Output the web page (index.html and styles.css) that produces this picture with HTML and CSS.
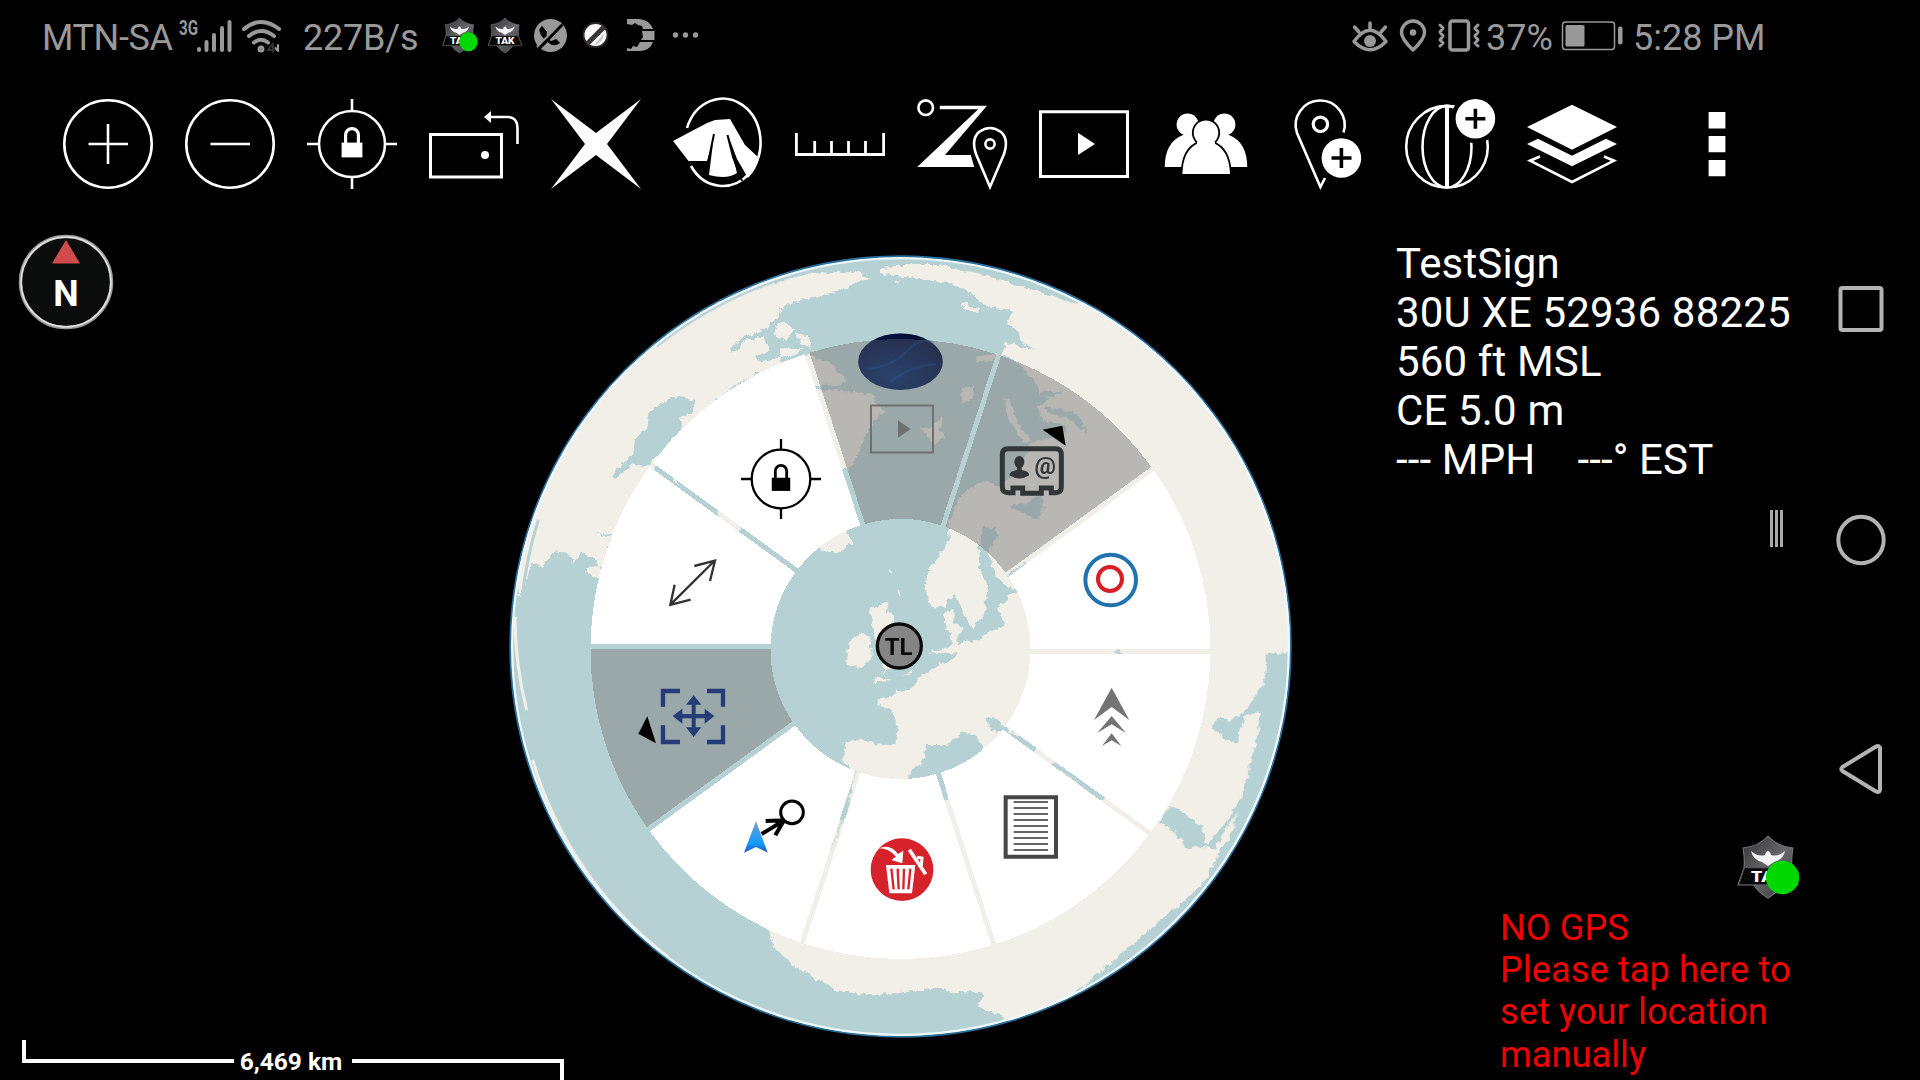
FILE: index.html
```html
<!DOCTYPE html>
<html lang="en">
<head>
<meta charset="utf-8">
<title>TAK map</title>
<link rel="stylesheet" href="styles.css">
</head>
<body>
<svg class="defs" aria-hidden="true">
  <defs>
    <linearGradient id="steel" x1="0" y1="0" x2="1" y2="1"><stop offset="0" stop-color="#2c2c30"/><stop offset=".5" stop-color="#68686c"/><stop offset="1" stop-color="#2e2e32"/></linearGradient>
    <symbol id="lock" viewBox="0 0 90 90">
      <g fill="none" stroke="currentColor" stroke-width="2.6"><circle cx="45" cy="45" r="33"/><path d="M45 0V12M45 78V90M0 45H12M78 45H90"/><path d="M38.6 44V36a6.4 6.4 0 0 1 12.8 0V44" stroke-width="3.2"/></g>
      <path d="M34.6 43.6H55.4V58.4H34.6z" fill="currentColor"/>
    </symbol>
    <symbol id="tak" viewBox="0 0 62 64">
      <path d="M31 1C24 9 15 12 6 13Q8 24 7 33L1 50H17Q21 57 31 63Q41 57 45 50H61L55 33Q54 24 56 13C47 12 38 9 31 1z" fill="url(#steel)" stroke="#77777a" stroke-width="1.1"/>
      <path d="M7.500 33H54.500L60 49.500H2z" fill="#060606" stroke="#4a4a4c" stroke-width=".8"/>
      <path d="M14 16Q21 22 28 20L29 17L31 16L33 17L34 20Q41 22 48 16Q46 25 37 27L31 31L25 27Q16 25 14 16z" fill="#f4f4f4"/>
      <text x="31" y="47" text-anchor="middle" textLength="34" lengthAdjust="spacingAndGlyphs" class="tak-label">TAK</text>
    </symbol>
  </defs>
</svg>
<div class="screen">
  <div class="app">
    <header class="status">
      <div class="status-left">
        <span class="carrier">MTN-SA</span>
        <svg class="signal" width="56" height="36" viewBox="178 17 56 36">
          <text x="179" y="34" class="net" textLength="19" lengthAdjust="spacingAndGlyphs">3G</text>
          <path d="M199 48V49M206.500 41V49M214 34V49M222 27V49M229.500 21V49" stroke="currentColor" stroke-width="4" stroke-linecap="round"/>
        </svg>
        <svg class="wifi" width="42" height="36" viewBox="241 17 42 36" fill="none" stroke="currentColor" stroke-width="4" stroke-linecap="round">
          <path d="M244 28Q261 14 279 28M249 35Q261 25 274 35M254 41.500Q261 36 268 41.500"/><circle cx="261" cy="48" r="1.500"/><path d="M278 44V50M278 50L275.500 47" stroke-width="2"/><path d="M272.500 43L268 49H274M273 43V51" stroke="#333" stroke-width="2"/>
        </svg>
        <span class="rate">227B/s</span>
        <svg class="notices" width="260" height="38" viewBox="441 18 260 38">
          <use href="#tak" x="442" y="18" width="35" height="37"/><ellipse cx="468.500" cy="42.700" rx="9.300" ry="9.500" fill="#00d800"/>
          <use href="#tak" x="487.500" y="18" width="35" height="37"/>
          <circle cx="550.500" cy="36.500" r="16.500" fill="#999"/>
          <path d="M542 28L546 33Q545 38 551 43L556 41L559 44Q555 47 550 44Q541 38 540 31z" fill="#000" stroke="#000" stroke-width="1.500"/><path d="M539 49L562 25" stroke="#000" stroke-width="4"/><path d="M537 48L561 23.500" stroke="#999" stroke-width="2"/>
          <circle cx="595.500" cy="36" r="12" fill="#fff" stroke="#2c2626" stroke-width="2"/><path d="M594 46Q604 44 604 34z" fill="#ccc"/><path d="M587 45L604 28" stroke="#3b3434" stroke-width="5"/>
          <path d="M627 20H639Q650 21 653 30H643L642 27L638 26L635 24L632 26L627 25zM642 32H654.500V41H641L643 38zM640 43H653Q650 52 639 52H627V49L631 50L633 47L637 48z" fill="#999"/>
          <g fill="#999"><circle cx="675.500" cy="36" r="2.700"/><circle cx="685.500" cy="36" r="2.700"/><circle cx="695.500" cy="36" r="2.700"/></g>
        </svg>
      </div>
      <div class="status-right">
        <svg width="132" height="38" viewBox="1350 18 132 38" fill="none" stroke="#999" stroke-width="3.500" stroke-linecap="round" stroke-linejoin="round">
          <path d="M1354 42.500Q1370 20 1386 42.500Q1370 59 1354 42.500zM1370 24V30M1354.500 28L1359 33M1385.500 28L1381 33"/><circle cx="1370" cy="42" r="6" fill="#999" stroke="none"/>
          <path d="M1413 51Q1401.500 40 1401.500 33.500A11.500 11.500 0 0 1 1424.500 33.500Q1424.500 40 1413 51z"/><circle cx="1413" cy="33.500" r="3.300" fill="#999" stroke="none"/>
          <rect x="1450" y="22" width="18.500" height="29" rx="2.500"/><path d="M1440 26L1443 29L1440 33L1443 37L1440 41L1443 44L1440 47M1478 26L1475 29L1478 33L1475 37L1478 41L1475 44L1478 47" stroke-width="3"/>
        </svg>
        <span class="percent">37%</span>
        <svg class="battery" width="64" height="34" viewBox="1560 20 64 34"><rect x="1562.500" y="23" width="52" height="27.500" rx="3" fill="none" stroke="#999" stroke-width="1.500"/><rect x="1565.500" y="26" width="19" height="21.500" rx="1.500" fill="#999"/><rect x="1618" y="27.500" width="4.500" height="18" rx="2" fill="#999"/></svg>
        <span class="clock">5:28 PM</span>
      </div>
    </header>

    <nav class="toolbar">
      <svg viewBox="0 0 90 90" class="line"><circle cx="45" cy="45" r="43.700"/><path d="M25.500 45H65M45 25V65"/></svg>
      <svg viewBox="0 0 90 90" class="line"><circle cx="45" cy="45" r="43.700"/><path d="M25.500 45H65"/></svg>
      <svg viewBox="0 0 90 90"><use href="#lock" width="90" height="90"/></svg>
      <svg viewBox="0 0 90 90" class="line"><path d="M1.500 35.500H72.500V78H1.500z" stroke-width="3"/><path d="M58 18H80Q88.500 19 88.500 29V45"/><path d="M55 18L62 12V24z" fill="#fff" stroke="none"/><circle cx="56" cy="56" r="4" fill="#fff" stroke="none"/></svg>
      <svg viewBox="0 0 90 90" class="solid"><path d="M0 0L45 34L90 0L56 45L90 90L45 56L0 90L34 45z"/></svg>
      <svg viewBox="0 0 90 90" class="solid"><path d="M14 29A37.800 43.700 0 1 1 18 67" fill="none" stroke="#fff" stroke-width="2.600"/><path d="M0 42L34 24L42 21L44 25L40 44L34 62L15.500 62zM42 21L57 20L72 46L86 59Q84 70 75 79L64 60L55 36L64 74Q54 81 36 76L40 44z"/><path d="M41 35L35 64M54.500 36L60 58L69 82" fill="none" stroke="#000" stroke-width="2"/></svg>
      <svg viewBox="0 0 90 90" class="line"><path d="M1.400 34V55.500H88.600V34M19.700 42V55M36.500 42V55M53.500 42V55M70.500 42V55" stroke-width="2.800"/></svg>
      <svg viewBox="0 0 90 90" class="line"><circle cx="8.700" cy="8.700" r="7.300"/><path d="M22.800 6.700H70L28 56H53.800L57.200 68H0.200L61.200 10.300H22.800z" fill="#fff" stroke="none"/><path d="M73 88L59 55Q54 40 62 33Q73 25 84 33Q92 40 87 55z"/><circle cx="73" cy="45" r="4.600"/></svg>
      <svg viewBox="0 0 90 90" class="line"><path d="M1.500 12.800H88.500V77.500H1.500z" stroke-width="3"/><path d="M39 33.700L56 45L39 56z" fill="#fff" stroke="none"/></svg>
      <svg viewBox="0 0 90 90" class="solid"><circle cx="26.600" cy="25.500" r="11"/><circle cx="63.400" cy="25.500" r="11"/><path d="M3.700 68Q4 43 22 36H36V68zM86.300 68Q86 43 68 36H54V68z"/><g stroke="#000" stroke-width="3.500" paint-order="stroke"><path d="M21.400 75Q22 50 38 44H52Q68 50 69 75z"/><circle cx="45" cy="33.700" r="12.300"/></g><path d="M36 43H54V50H36z"/></svg>
      <svg viewBox="0 0 90 90" class="line"><path d="M60.500 33.500A24.500 24.500 0 1 0 14 34L37.400 88L42 79"/><circle cx="37.400" cy="25.300" r="7.200" stroke-width="3.200"/><circle cx="58.400" cy="59" r="19.800" fill="#fff" stroke="none"/><path d="M48.500 59H68.500M58.400 49V69" stroke="#000" stroke-width="3.600"/></svg>
      <svg viewBox="0 0 90 90" class="line"><circle cx="42" cy="47.700" r="40.800"/><ellipse cx="42" cy="47.700" rx="24.500" ry="40.800"/><path d="M42 7V88" stroke-width="4"/><circle cx="70.400" cy="19.700" r="24.500" fill="#000" stroke="none"/><circle cx="70.400" cy="19.700" r="19.800" fill="#fff" stroke="none"/><path d="M60.400 19.700H80.400M70.400 9.700V29.700" stroke="#000" stroke-width="3.600"/></svg>
      <svg viewBox="0 0 90 90" class="solid"><path d="M45 5.700L90 28L45 50.700L0 28zM0 45L11 39.700L45 56.700L79 39.700L90 45L45 67.300z"/><path d="M13 57.500L3 61.700L45 83L87 61.700L77 57.500" fill="none" stroke="#fff" stroke-width="2.600"/></svg>
      <svg viewBox="0 0 90 90" class="solid more"><path d="M36.600 13H53.400V29.500H36.600zM36.600 37H53.400V53.300H36.600zM36.600 61H53.400V77.300H36.600z"/></svg>
    </nav>

    <main class="map">
      <section class="left">
        <svg class="compass" width="96" height="96" viewBox="18 234 96 96"><circle cx="66" cy="282" r="45.500" fill="#0b0d0d" stroke="#999" stroke-width="3.500"/><circle cx="66" cy="282" r="45" fill="none" stroke="#e4e4e4" stroke-width="1.500"/><path d="M66 240L80 263.500H52z" fill="#d04b4b"/><text x="66" y="305.500" text-anchor="middle" class="north">N</text></svg>
        <div class="scale"><i class="arm start"></i><b>6,469 km</b><i class="arm end"></i></div>
      </section>

      <svg class="globe" width="800" height="864" viewBox="500 216 800 864">
        <defs>
          <clipPath id="disc"><circle cx="900.500" cy="646.500" r="389.500"/></clipPath>
          <filter id="coast" x="-5%" y="-5%" width="110%" height="110%"><feTurbulence type="fractalNoise" baseFrequency=".16" numOctaves="3" seed="4"/><feDisplacementMap in="SourceGraphic" scale="7" xChannelSelector="R" yChannelSelector="G"/></filter>
          <radialGradient id="deep" cx=".4" cy=".75" r=".8"><stop offset="0" stop-color="#072a63"/><stop offset=".6" stop-color="#04184a"/><stop offset="1" stop-color="#010e30"/></radialGradient>
          <linearGradient id="arrowblue" x1="0" y1="0" x2="0" y2="1"><stop offset="0" stop-color="#9a9aa0"/><stop offset=".35" stop-color="#3d9be8"/><stop offset=".7" stop-color="#149cff"/><stop offset="1" stop-color="#1e55b8"/></linearGradient>
          <path id="wedge" d="M309.960 5A310 310 0 0 1 250.800 182.200L105.200 76.400A130 130 0 0 0 129.900 5z"/>
        </defs>
        <circle cx="900.500" cy="646.500" r="390" fill="#b5d1d3" stroke="#2b6f9c" stroke-width="2.400"/>
        <g clip-path="url(#disc)">
          <g filter="url(#coast)" fill="#f2efe8">
            <!-- North America, Greenland, Iceland -->
            <g transform="translate(500 240) scale(.33333)">
              <path d="M62 1070L98 965L130 985L165 930L205 945L220 970L240 940L275 950L305 985L330 900L500 720L455 690L600 560L640 490L700 440L790 385L770 350L720 340L690 330L730 290L790 270L835 235L850 195L940 170L1010 155L1070 130L1110 110L1060 95L1000 100L960 95L880 110L760 145L600 210L470 290L355 375L170 620L80 810L30 1000z"/>
              <path d="M260 985L300 975V1010L270 1005z"/>
              <path d="M820 255L850 245L885 265L860 300L830 290zM890 275L925 290L935 320L900 310zM735 300L790 290L810 330L760 350L700 345zM840 325L905 325L890 345L840 350zM780 365L850 350L835 380L770 400zM680 380L740 370L730 400L690 405z"/>
              <path d="M520 700L545 745L515 725zM650 820L670 800L730 860L705 880L650 840z"/>
              <path d="M920 340L985 365L1010 390L1035 415L1030 435L960 437L900 430zM900 448L1050 455L1110 460L1130 490L1155 520L1120 545L1100 580L1075 640L1045 688L1000 685L950 620z"/>
              <path d="M900 900L1040 870L1055 905L1030 930L985 940L960 925z"/>
              <path d="M1110 1110L1140 1095L1165 1090L1160 1120L1185 1130L1170 1170L1190 1200L1250 1260L1230 1300L1150 1320L1120 1330L1150 1290L1140 1240L1120 1180z"/>
            </g>
            <!-- Siberia, Scandinavia, Russia -->
            <g transform="translate(880 240) scale(.33333)">
              <path d="M0 90L60 75L180 75L330 108L570 185L700 180L1300 600V1240H140L300 1195L375 1150L350 1100L385 1080L380 1065L430 1055L385 1040L350 1010L325 940L350 885L345 860L310 865L295 940L300 990L325 1040L310 1130L275 1165L250 1120L220 1060L190 1105L155 1100L135 1040L140 990L185 940L210 900L205 850L240 770L290 730L330 725L360 735L420 690L450 610L560 580L550 555L490 540L470 500L510 480L480 460L470 430L420 375L365 340L375 305L465 330L430 310L415 280L380 240L400 215L310 195L270 160L210 130L100 115L0 100z"/>
              <path d="M375 470L390 480L400 520L420 560L455 600L430 605L400 560L380 520zM285 350L350 342L330 365L290 362zM120 560L160 560L185 530L180 570L200 590L160 615zM245 445L280 440L275 480L245 490zM240 190L300 205L290 218L255 208zM40 122L65 122L50 128zM195 1120L220 1110L225 1150L250 1160L230 1220L195 1170z"/>
            </g>
            <!-- Western Europe and north-west Africa -->
            <g transform="translate(500 630) scale(.33333)">
              <path d="M1045 40L1080 10L1110 20L1115 80L1090 110L1040 108zM1120 155L1150 125L1240 100V130L1170 150z"/>
              <path d="M1130 205L1185 200L1190 180L1230 180L1260 140L1400 60V700H1030L1050 495L1065 425L1030 395L1040 335L1060 330L1185 345L1195 310L1185 260L1130 225z"/>
              <path d="M805 905L820 950L900 1020L1020 1085L1140 1095L1320 1075L1360 1090L1440 1085L1450 1100L1430 1130L1510 1160L1560 1230L2300 600V-60L1520 20L1380 40L1330 240L1380 300L1440 430L1300 520L1010 570L990 650L960 700L800 850z"/>
            </g>
          </g>
          <g filter="url(#coast)" fill="#b5d1d3">
            <!-- Hudson Bay -->
            <path transform="translate(500 240) scale(.33333)" d="M590 480L520 468L485 490L445 520L440 560L405 600L400 640L340 700L345 718L400 670L440 680L470 650L550 560L540 530L575 520zM285 878L335 882L330 890zM490 700L655 825L640 840L495 715z"/>
            <!-- White Sea, Kara gulfs, Baltic -->
            <path transform="translate(880 240) scale(.33333)" d="M390 795L440 790L485 760L490 810L475 840L440 825zM500 500L590 520L625 580L600 565L575 540L500 515zM480 455L550 455L530 465L485 470zM380 1005L435 965L445 975L385 1010z"/>
            <!-- Mediterranean, Black Sea, Red Sea, Gulf, Southern Ocean -->
            <g transform="translate(880 630) scale(.33333)">
              <path d="M-5 140L50 150L110 115L140 70L215 50L205 0L120 -60L100 90L0 130zM230 30L250 0L350 -10L320 15L250 35zM0 225L30 235L50 270L45 345L-20 343L-15 260zM60 460L135 385L140 345L200 345L250 305L285 315L310 355L300 420L200 440V510H170L165 460zM312 262L345 265L380 295L470 350L460 370L370 310L335 300zM520 395L580 430L680 500L660 515L570 440L515 405zM700 70L715 55L728 72z"/>
              <path d="M-90 500L-120 600L-150 670L-125 600L-95 500z"/>
              <path d="M1205 45L1210 95L1170 95L1150 160L1105 230L1090 250L1050 270L1010 262L995 295L1045 335L1070 340L1095 255L1140 245L1130 340L1085 500L1050 560L975 655L1000 655L1070 545L1060 600L950 790L850 905L960 810L1110 600L1200 350L1225 150z"/>
              <path d="M865 530L900 540L965 590L980 650L920 655L880 600L840 575zM0 1095L180 1075L220 1090L300 1085L310 1100L290 1130L370 1160L300 1240H-340L-240 1060L-120 1092z"/>
            </g>
          </g>
          <!-- Thin slivers of sea and land that hug the limb -->
          <path transform="translate(500 240) scale(.33333)" d="M470 318A1160 1160 0 0 1 930 94M66 1080A1150 1150 0 0 1 115 840" fill="none" stroke="#b5d1d3" stroke-width="9"/>
          <path transform="translate(880 240) scale(.33333)" d="M230 84A1150 1150 0 0 1 560 180" fill="none" stroke="#b5d1d3" stroke-width="8"/>
          <path transform="translate(500 630) scale(.33333)" d="M45 -40A1150 1150 0 0 0 80 240M98 390A1160 1160 0 0 0 503 980" fill="none" stroke="#f2efe8" stroke-width="9"/>
          <path transform="translate(860 590)" d="M29 -20l3 3M38 0l2 6M79 72l2 4" stroke="#f2efe8" stroke-width="1.500"/>
          <circle cx="900.500" cy="646.500" r="388.600" fill="none" stroke="#eef8fb" stroke-width="2.800"/>
        </g>
        <ellipse cx="900.500" cy="361.700" rx="42.300" ry="28.300" fill="url(#deep)"/>

        <!-- Radial menu, ten slices clockwise from due east -->
        <g transform="translate(900.500 649)" shape-rendering="crispEdges">
          <g fill="#fff"><use href="#wedge"/><use href="#wedge" transform="rotate(36)"/><use href="#wedge" transform="rotate(72)"/><use href="#wedge" transform="rotate(108)"/><use href="#wedge" transform="rotate(180)"/><use href="#wedge" transform="rotate(216)"/><use href="#wedge" transform="rotate(324)"/></g>
          <g fill="#808080" fill-opacity=".5"><use href="#wedge" transform="rotate(144)"/><use href="#wedge" transform="rotate(252)"/><use href="#wedge" transform="rotate(288)"/></g>
        </g>
        <ellipse cx="900.500" cy="361.700" rx="42.300" ry="28.300" fill="url(#deep)" opacity=".42"/>
        <path d="M868 369Q893 366 907 351T934 343M890 382Q910 366 936 364" fill="none" stroke="#2a5796" stroke-width="2.500" opacity=".35"/>

        <!-- Slice icons -->
        <path d="M871 405.500H933V452.500H871z" fill="none" stroke="#707070" stroke-width="2"/><path d="M898 420.500L910.700 429L898 437.700z" fill="#707070"/>
        <use href="#lock" x="741" y="439" width="80" height="80" color="#000"/>
        <path transform="translate(500 240) scale(.33333)" d="M512 1093L643 963M583 978L645 962L630 1023M572 1079L511 1095L524 1034" fill="none" stroke="#333" stroke-width="7"/>
        <g transform="translate(880 240) scale(.33333)">
          <path d="M385 626H527Q544 626 544 643V742Q544 758 527 758H514V744H484V760H428V744H399V758H385Q367 758 367 742V643Q367 626 385 626z" fill="none" stroke="#333638" stroke-width="15"/>
          <ellipse cx="418" cy="666" rx="15" ry="18" fill="#333638"/><path d="M411 675H425V690Q447 693 448 706Q418 725 388 706Q390 693 411 690z" fill="#333638"/>
          <text x="496" y="703" text-anchor="middle" class="at">@</text>
          <path d="M488 569L547 557L557 617z" fill="#000"/>
          <circle cx="692" cy="1020" r="76" fill="none" stroke="#2272ad" stroke-width="12"/><circle cx="690" cy="1017" r="36" fill="none" stroke="#d91f25" stroke-width="12"/>
        </g>
        <g transform="translate(880 630) scale(.33333)">
          <path d="M695 173L748 270L695 231L642 270zM695 258L738 309L695 283L652 309zM695 310L724 348L695 331L666 348z" fill="#747474"/>
          <path d="M377 502H528V680H377z" fill="#fff" stroke="#444647" stroke-width="12"/><path d="M401 516H504M401 534H504M401 552H504M401 570H504M401 588H504M401 606H504M401 624H504M401 642H504M401 660H504" stroke="#666" stroke-width="6"/>
          <circle cx="66" cy="719" r="94" fill="#d6222a"/>
          <path d="M18 705H106L96 790H28z" fill="#fff"/><path d="M34 716L41 778M53 716L56 778M72 716L70 778M91 716L85 778" stroke="#d6222a" stroke-width="7"/><path d="M-3 655Q30 640 54 672L70 662L67 700L34 690L48 680Q26 655 -3 655z" fill="#fff"/><path d="M88 659L137 733" stroke="#fff" stroke-width="11"/><path d="M111 682L126 684L124 708" fill="none" stroke="#fff" stroke-width="9"/>
        </g>
        <g transform="translate(500 630) scale(.33333)">
          <path d="M540 183H489V230M621 183H669V230M489 286V336H540M669 286V336H621" fill="none" stroke="#263c78" stroke-width="13"/>
          <path d="M581 196L604 224H587V252H614V236L643 258L614 281V265H587V292H604L581 321L558 292H575V265H547V281L518 258L547 236V252H575V224H558z" fill="#263c78"/>
          <path d="M442 259L468 340L415 311z" fill="#000"/>
          <path d="M785 612L848 574M797 573L852 571L826 616" fill="none" stroke="#000" stroke-width="12"/><circle cx="876" cy="547" r="34" fill="#fff" stroke="#000" stroke-width="9"/>
          <path d="M768 573L803 668L768 651L732 668z" fill="url(#arrowblue)"/>
          <circle cx="1198" cy="48" r="66" fill="#858585" stroke="#0b0b0b" stroke-width="10"/>
          <text x="1196" y="75" text-anchor="middle" class="tl">TL</text>
        </g>
      </svg>

      <section class="right">
        <div class="info">
          <div>TestSign</div><div>30U XE 52936 88225</div><div>560 ft MSL</div><div>CE 5.0 m</div><div class="speed"><span>--- MPH</span><span>---° EST</span></div>
        </div>
        <div class="grip"><i></i><i></i><i></i></div>
        <svg class="badge" width="62" height="64" viewBox="0 0 62 64"><use href="#tak" width="62" height="64"/><circle cx="45.500" cy="42.500" r="16.700" fill="#00d800"/></svg>
        <div class="warning">NO GPS<br>Please tap here to<br>set your location<br>manually</div>
      </section>
    </main>
  </div>
  <aside class="keys">
    <svg width="52" height="52" viewBox="0 0 52 52"><rect x="5.500" y="5" width="41" height="42" rx="2"/></svg>
    <svg width="52" height="52" viewBox="0 0 52 52"><ellipse cx="26" cy="27" rx="22.700" ry="23.200"/></svg>
    <svg width="52" height="52" viewBox="0 0 52 52"><path d="M45 5V47Q44 50 41 48.500L7.500 28Q5 26 7.500 24L41 3.500Q44 2 45 5z"/></svg>
  </aside>
</div>
</body>
</html>
```
FILE: styles.css
```css
* { box-sizing: border-box; }
body { margin: 0; background: #000; color: #fff; font-family: Roboto, "Liberation Sans", sans-serif; overflow: hidden; }
svg { display: block; flex: none; overflow: visible; }
.defs { position: absolute; width: 0; height: 0; }
.screen { width: 1920px; height: 1080px; display: flex; background: #000; }
.app { width: 1800px; display: flex; flex-direction: column; }

.status { height: 72px; padding: 0 35px 0 42px; display: flex; justify-content: space-between; color: #999; font-size: 36px; line-height: 68px; white-space: nowrap; }
.status-left, .status-right { display: flex; align-items: center; }
.status span { padding-top: 4px; }
.carrier { width: 136px; letter-spacing: -.4px; }
.net { font: bold 20px Roboto, sans-serif; fill: currentColor; }
.wifi { margin-left: 7px; }
.rate { margin-left: 20px; width: 118px; letter-spacing: -.2px; }
.notices { margin-left: 20px; }
.percent { margin-left: 4px; width: 74px; }
.clock { margin-left: 9px; width: 132px; }
.tak-label { font: 900 15px Roboto, sans-serif; fill: #fff; }

.toolbar { height: 144px; padding: 27px 0 0 63px; display: flex; gap: 32px; color: #fff; }
.toolbar svg { width: 90px; height: 90px; }
.line { fill: none; stroke: #fff; stroke-width: 2.600; }
.solid { fill: #fff; }
.toolbar .more { margin-left: 23px; }

.map { flex: 1; display: grid; grid-template-columns: 500px 800px 500px; }
.left { display: flex; flex-direction: column; justify-content: space-between; z-index: 1; }
.compass { margin: 18px 0 0 18px; }
.north { font: bold 36px Roboto, sans-serif; fill: #fff; }
.scale { width: 542px; height: 40px; margin-left: 22px; display: flex; align-items: center; }
.scale b { width: 118px; text-align: center; font-size: 24.500px; line-height: 38px; padding-top: 4px; padding-right: 4px; white-space: nowrap; }
.arm { width: 212px; height: 23px; border: 0 solid #fff; align-self: flex-start; border-bottom-width: 4px; }
.start { border-left-width: 4px; }
.end { align-self: flex-end; height: 21px; border-width: 4px 4px 0 0; }
.at { font: bold 72px Roboto, sans-serif; fill: #333638; }
.tl { font: bold 72px Roboto, sans-serif; fill: #0b0b0b; }

.right { display: flex; flex-direction: column; padding: 23px 0 0 96px; }
.info { font-size: 42px; line-height: 49px; letter-spacing: .15px; white-space: nowrap; }
.speed { display: flex; gap: 42px; }
.grip { display: flex; gap: 2px; height: 37px; margin: 26px 0 0 374px; }
.grip i { width: 3px; background: #aaa; }
.badge { margin: 288px 0 0 341px; }
.warning { margin: 8px 0 0 104px; font-size: 36px; line-height: 42.200px; letter-spacing: .15px; color: #f00000; white-space: nowrap; }

.keys { width: 120px; padding: 283px 0 0 35px; display: flex; flex-direction: column; gap: 178px; }
.keys svg { fill: none; stroke: #b3b3b3; stroke-width: 4; }
```
